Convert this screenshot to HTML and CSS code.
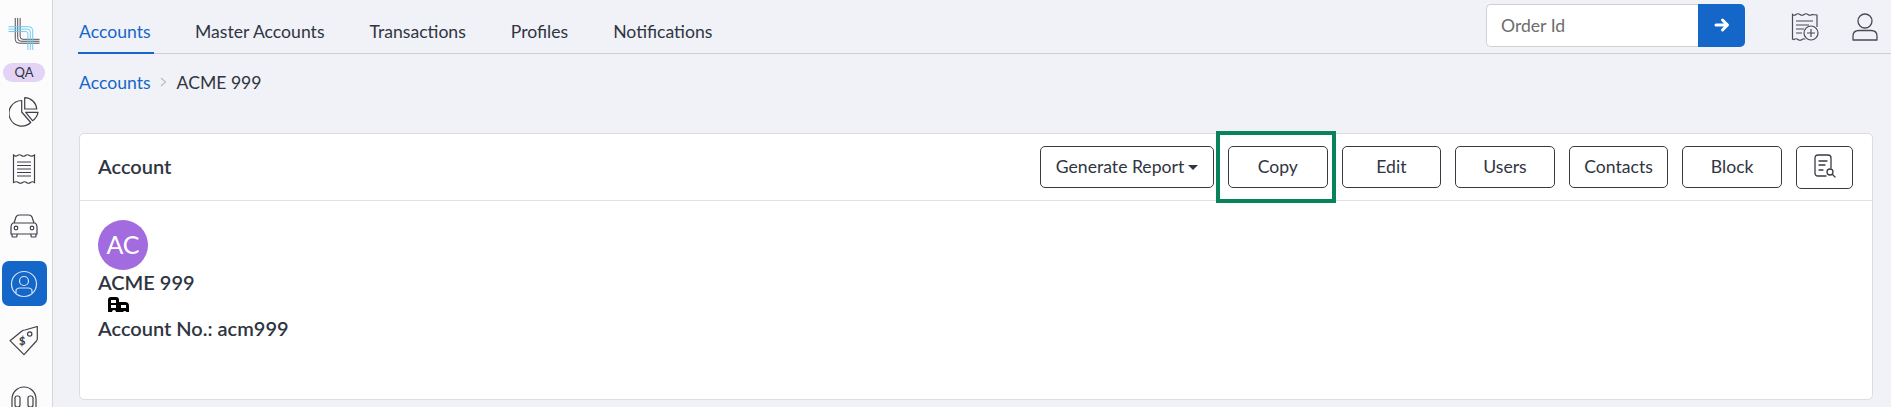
FILE: index.html
```html
<!DOCTYPE html>
<html>
<head>
    <title>Account</title>
    <link rel="stylesheet" href="styles.css">
</head>
<body>
    <div class="app">
        <!-- Sidebar -->
        <aside class="sidebar">
            <svg class="logo" width="32" height="34" viewBox="0 0 32 34" fill="none" stroke-width="1">
                <g stroke="#4a4a55">
                    <path d="M7 1V23Q7 27 11 27H32"/>
                    <path d="M9.5 1V21.500Q9.5 25 13 25H32"/>
                    <path d="M12 1V20Q12 23 15 23H32"/>
                </g>
                <g stroke="#6cc8ee">
                    <path d="M0 10H21Q25 10 25 14V34"/>
                    <path d="M0 12.500H19.500Q22.500 12.500 22.500 15.500V34"/>
                    <path d="M0 15H18Q20 15 20 17V34"/>
                </g>
            </svg>
            <span class="env-badge">QA</span>
            <a class="side-item side-pie">
                <svg width="30" height="30" viewBox="0 0 30 30" fill="none" stroke="#3f3f4a" stroke-width="1.2" stroke-linejoin="round">
                    <path d="M12.700 3.500A12.800 12.800 0 1 0 21.700 25.500L12.700 15Z"/>
                    <path d="M15.700 0.700A12.500 12.500 0 0 1 27.800 12H15.700Z"/>
                    <path d="M16.700 15.300H29A13 13 0 0 1 23.500 23.700Z"/>
                </svg>
            </a>
            <a class="side-item side-receipt">
                <svg width="24" height="30" viewBox="0 0 24 30" fill="none" stroke="#3f3f4a" stroke-width="1.2">
                    <path d="M1.500 1Q3.500 3 5.500 1.500T9.500 1.500T13.500 1.500T17.500 1.500T22.500 1V28.500Q20.500 27 18.500 28.500T14.500 28.500T10.500 28.500T6.500 28.500T1.500 28.500Z"/>
                    <path d="M5 8H19M5 11.500H19M5 15H19M5 18.500H19M5 22H19"/>
                </svg>
            </a>
            <a class="side-item side-car">
                <svg width="28" height="24" viewBox="0 0 28 24" fill="none" stroke="#3f3f4a" stroke-width="1.2">
                    <path d="M4 9L6 3Q7 1 9 1H19Q21 1 22 3L24 9"/>
                    <path d="M3 9H25Q27 10 27 13V20H1V13Q1 10 3 9Z"/>
                    <path d="M2 20V22Q2 23 3 23H6Q7 23 7 22V20M21 20V22Q21 23 22 23H25Q26 23 26 22V20"/>
                    <circle cx="6" cy="14" r="1.800"/>
                    <circle cx="22" cy="14" r="1.800"/>
                </svg>
            </a>
            <a class="side-item side-active">
                <svg width="28" height="28" viewBox="0 0 28 28" fill="none" stroke="#d5e4f7" stroke-width="1.2">
                    <circle cx="14" cy="14" r="12.500"/>
                    <circle cx="14" cy="11" r="4.500"/>
                    <path d="M6 23V21Q6 18 10 18H18Q22 18 22 21V23"/>
                </svg>
            </a>
            <a class="side-item side-tag">
                <svg width="30" height="30" viewBox="0 0 30 30" fill="none" stroke="#3f3f4a" stroke-width="1.2" stroke-linejoin="round">
                    <path d="M1 14.700L13 5Q14 4 16 4L28.300 0.500V13Q28.300 14 27 15.500L15 28.700Z"/>
                    <circle cx="20.700" cy="8" r="2.200"/>
                </svg>
                <span class="tag-dollar">$</span>
            </a>
            <a class="side-item side-headset">
                <svg width="28" height="22" viewBox="0 0 28 22" fill="none" stroke="#3f3f4a" stroke-width="1.2">
                    <path d="M2 22V14A12 12 0 0 1 26 14V22"/>
                    <rect x="5" y="11" width="5" height="11" rx="2"/>
                    <rect x="18" y="11" width="5" height="11" rx="2"/>
                </svg>
            </a>
        </aside>

        <main class="content">
            <!-- Top nav -->
            <nav class="topnav">
                <div class="tabs">
                    <a class="tab active">Accounts</a>
                    <a class="tab">Master Accounts</a>
                    <a class="tab">Transactions</a>
                    <a class="tab">Profiles</a>
                    <a class="tab">Notifications</a>
                </div>
                <div class="order-search">
                    <input type="text" placeholder="Order Id">
                    <button class="go-btn">
                        <svg width="16" height="16" viewBox="0 0 16 16" fill="none" stroke="#fff" stroke-width="3" stroke-linejoin="round" stroke-linecap="round">
                            <path d="M2 8H13M8.500 3L13.500 8L8.500 13"/>
                        </svg>
                    </button>
                </div>
                <a class="nav-icon receipt-plus">
                    <svg width="28" height="28" viewBox="0 0 28 28" fill="none" stroke="#4a4a55" stroke-width="1.2">
                        <path d="M14 26.500Q13 25 11 26.500T7 26.500T3 26.500L1.500 26V1.500Q3 3 5 1.500T9 1.500T13 1.500T17 1.500T21 1.500L26 2V14"/>
                        <path d="M5 8H22M5 12H18M5 16H13M5 20H11"/>
                        <circle cx="20" cy="20" r="7"/>
                        <path d="M20 16V24M16 20H24"/>
                    </svg>
                </a>
                <a class="nav-icon user-icon">
                    <svg width="26" height="28" viewBox="0 0 26 28" fill="none" stroke="#4a4a55" stroke-width="1.3">
                        <circle cx="13" cy="8" r="7"/>
                        <path d="M1 27V23Q1 17.500 7 17.500H19Q25 17.500 25 23V27Z" stroke-linejoin="round"/>
                    </svg>
                </a>
            </nav>

            <div class="breadcrumb">
                <a>Accounts</a>
                <span class="crumb-sep">
                    <svg width="7" height="10" viewBox="0 0 7 10" fill="none" stroke="#bdbdbd" stroke-width="1.2"><path d="M1 1L5.500 5L1 9"/></svg>
                </span>
                <span>ACME 999</span>
            </div>

            <!-- Account card -->
            <section class="card">
                <header class="card-header">
                    <h2>Account</h2>
                    <div class="actions">
                        <button class="btn btn-report">Generate Report<span class="caret"></span></button>
                        <div class="highlight-wrap">
                            <button class="btn">Copy</button>
                            <span class="highlight"></span>
                        </div>
                        <button class="btn">Edit</button>
                        <button class="btn">Users</button>
                        <button class="btn">Contacts</button>
                        <button class="btn">Block</button>
                        <button class="btn btn-icon">
                            <svg width="24" height="26" viewBox="0 0 24 26" fill="none" stroke="#3a3a42" stroke-width="1.3" stroke-linecap="round">
                                <path d="M13 23H5Q2 23 2 20V5Q2 2 5 2H15Q18 2 18 5V15"/>
                                <path d="M6 8H14M6 12H12M6 17H10"/>
                                <circle cx="17" cy="19" r="3"/>
                                <path d="M19.500 21.500L22 24"/>
                            </svg>
                        </button>
                    </div>
                </header>
                <div class="card-body">
                    <div class="avatar">AC</div>
                    <div class="account-line">ACME 999</div>
                    <div class="account-type">
                        <svg width="21" height="16" viewBox="0 0 21 16" fill="#000">
                            <path fill-rule="evenodd" d="M0 3Q0 0 3 0H8Q11 0 11 3V5H17Q21 5 21 9V15H18.500A2 2 0 0 0 15 15H8A2 2 0 0 0 4 15H0ZM3 3V6H8V3ZM3 8V11H8V8ZM13 8V11H18V8Z"/>
                        </svg>
                    </div>
                    <div class="account-line">Account No.: acm999</div>
                </div>
            </section>
        </main>
    </div>
</body>
</html>
```

FILE: styles.css
```css
html, body {
    margin: 0;
    height: 100%;
    overflow: hidden;
}
body {
    font-family: "Lato", "Liberation Sans", sans-serif;
    font-size: 17.6px;
    color: #2f3542;
    background-color: #f1f2f7;
}
.app {
    display: flex;
    height: 407px;
}
.sidebar {
    width: 48px;
    flex-shrink: 0;
    background-color: #fcfcfd;
    border-right: 1px solid #d5d6da;
    display: flex;
    flex-direction: column;
    align-items: center;
    overflow: hidden;
    padding: 17px 4px 0 0;
}
.env-badge {
    flex-shrink: 0;
    width: 42px;
    height: 19px;
    margin-top: 13px;
    border-radius: 10px;
    background-color: #e3d3f5;
    font-size: 13px;
    line-height: 19px;
    text-align: center;
}
.side-item {
    display: flex;
    align-items: center;
    justify-content: center;
    flex-shrink: 0;
    position: relative;
}
.side-pie {
    margin-top: 15px;
}
.side-receipt {
    margin-top: 27px;
}
.side-car {
    margin-top: 30px;
}
.side-active {
    width: 45px;
    height: 45px;
    margin-top: 23px;
    border-radius: 7px;
    background-color: #1467c8;
}
.side-tag {
    margin-top: 20px;
}
.tag-dollar {
    position: absolute;
    left: 10px;
    top: 8px;
    font-size: 11px;
    font-weight: 900;
    color: #3f3f4a;
}
.side-headset {
    margin-top: 29px;
}
.content {
    flex: 1;
    min-width: 0;
}
.topnav {
    display: flex;
    align-items: center;
    height: 53px;
    margin-left: 25px;
    border-bottom: 1px solid #cdced3;
}
.tabs {
    display: flex;
    gap: 45px;
    height: 54px;
    margin-right: auto;
}
.tab {
    display: block;
    box-sizing: border-box;
    height: 54px;
    padding-top: 22px;
    line-height: 20px;
}
.tab.active {
    color: #1467c8;
    border-bottom: 2px solid #1467c8;
    width: 76px;
    margin-right: -4px;
    padding-left: 1px;
}
.order-search {
    display: flex;
    height: 43px;
    margin-right: 46px;
    margin-bottom: 3px;
}
.order-search input {
    width: 212px;
    box-sizing: border-box;
    padding: 0 14px;
    border: 1px solid #cfd0d4;
    border-right: none;
    border-radius: 5px 0 0 5px;
    background-color: #fff;
    font-family: inherit;
    font-size: 17.6px;
    outline: none;
}
.order-search input::placeholder {
    color: #6d6d6d;
}
.go-btn {
    width: 47px;
    border: none;
    border-radius: 0 5px 5px 0;
    background-color: #1467c8;
    display: flex;
    align-items: center;
    justify-content: center;
    padding: 0;
}
.nav-icon {
    display: flex;
}
.receipt-plus {
    margin-right: 33px;
}
.user-icon {
    margin-right: 13px;
}
.breadcrumb {
    display: flex;
    align-items: center;
    height: 56px;
    margin-left: 25px;
    padding-left: 1px;
}
.breadcrumb a {
    color: #1467c8;
}
.crumb-sep {
    display: flex;
    margin: 0 10px 0 9px;
}
.card {
    margin: 23px 18px 0 26px;
    height: 267px;
    box-sizing: border-box;
    background-color: #fff;
    border: 1px solid #dcdde1;
    border-radius: 5px;
}
.card-header {
    display: flex;
    align-items: center;
    justify-content: space-between;
    height: 67px;
    box-sizing: border-box;
    padding: 0 19px 0 18px;
    border-bottom: 1px solid #e0e1e4;
}
.card-header h2 {
    margin: 0 0 2px;
    font-size: 20px;
    font-weight: 600;
    color: #2f3542;
}
.actions {
    display: flex;
    align-items: center;
    gap: 14px;
}
.btn {
    width: 99.6px;
    height: 42px;
    box-sizing: border-box;
    padding: 0 0 2px;
    border: 1px solid #3a3a42;
    border-radius: 5px;
    background-color: #fff;
    font-family: inherit;
    font-size: 17.6px;
    color: #2f3542;
}
.btn-report {
    width: 174px;
}
.btn-icon {
    width: 57px;
    height: 43px;
    display: flex;
    align-items: center;
    justify-content: center;
}
.caret {
    display: inline-block;
    margin-left: 4px;
    vertical-align: 3px;
    border-top: 5px solid #2f3542;
    border-left: 5px solid transparent;
    border-right: 5px solid transparent;
}
.highlight-wrap {
    position: relative;
    display: flex;
}
.highlight {
    position: absolute;
    left: -12px;
    right: -8px;
    top: -15px;
    bottom: -15px;
    border: 4px solid #08825a;
}
.card-body {
    padding: 19px 18px;
}
.avatar {
    width: 50px;
    height: 50px;
    border-radius: 50%;
    background-color: #a26bdf;
    color: #fff;
    font-size: 25px;
    line-height: 48px;
    text-align: center;
}
.account-line {
    font-size: 20px;
    font-weight: 600;
    line-height: 24px;
}
.account-type {
    display: flex;
    height: 22px;
    padding: 3px 0 0 10px;
    box-sizing: border-box;
}
```
